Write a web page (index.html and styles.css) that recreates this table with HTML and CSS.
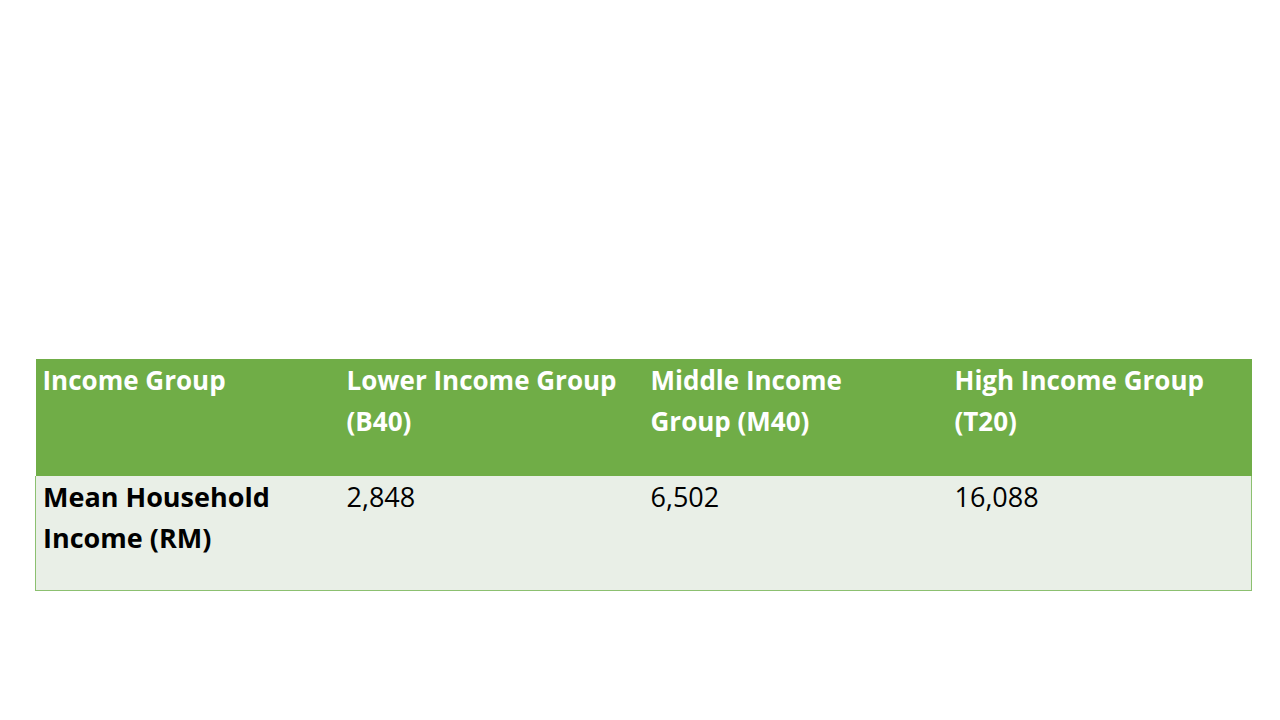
FILE: index.html
```html
<!DOCTYPE html>
<html>
<head>
<meta charset="utf-8">
<link rel="stylesheet" href="styles.css">
</head>
<body>
<div class="slide">
  <table class="income">
    <tr class="head">
      <td>Income Group</td>
      <td>Lower Income Group (B40)</td>
      <td>Middle Income Group (M40)</td>
      <td>High Income Group (T20)</td>
    </tr>
    <tr class="body">
      <td class="label">Mean Household Income (RM)</td>
      <td>2,848</td>
      <td>6,502</td>
      <td>16,088</td>
    </tr>
  </table>
</div>
</body>
</html>
```
FILE: styles.css
```css
html, body {
  margin: 0;
  padding: 0;
  background: #ffffff;
}
.slide {
  width: 1280px;
  height: 720px;
  padding-top: 359px;
  padding-left: 35px;
  box-sizing: border-box;
}
.income {
  border-collapse: collapse;
  table-layout: fixed;
  width: 1217px;
  font-family: "Open Sans", "Noto Sans", sans-serif;
  line-height: 41px;
}
.income td {
  width: 304px;
  vertical-align: top;
  padding: 0 23px 0 7px;
  box-sizing: border-box;
}
.head {
  height: 116px;
  background: #70ad47;
  color: #ffffff;
  font-weight: bold;
  font-size: 26px;
}
.head td {
  border-top: 1px solid #70ad47;
}
.body {
  height: 115px;
  background: #e9efe7;
  color: #000000;
  font-size: 27px;
}
.body td {
  border-bottom: 1px solid #8cc070;
}
.body td:first-child {
  border-left: 1px solid #8cc070;
}
.body td:last-child {
  border-right: 1px solid #8cc070;
}
.label {
  font-weight: bold;
}
```
